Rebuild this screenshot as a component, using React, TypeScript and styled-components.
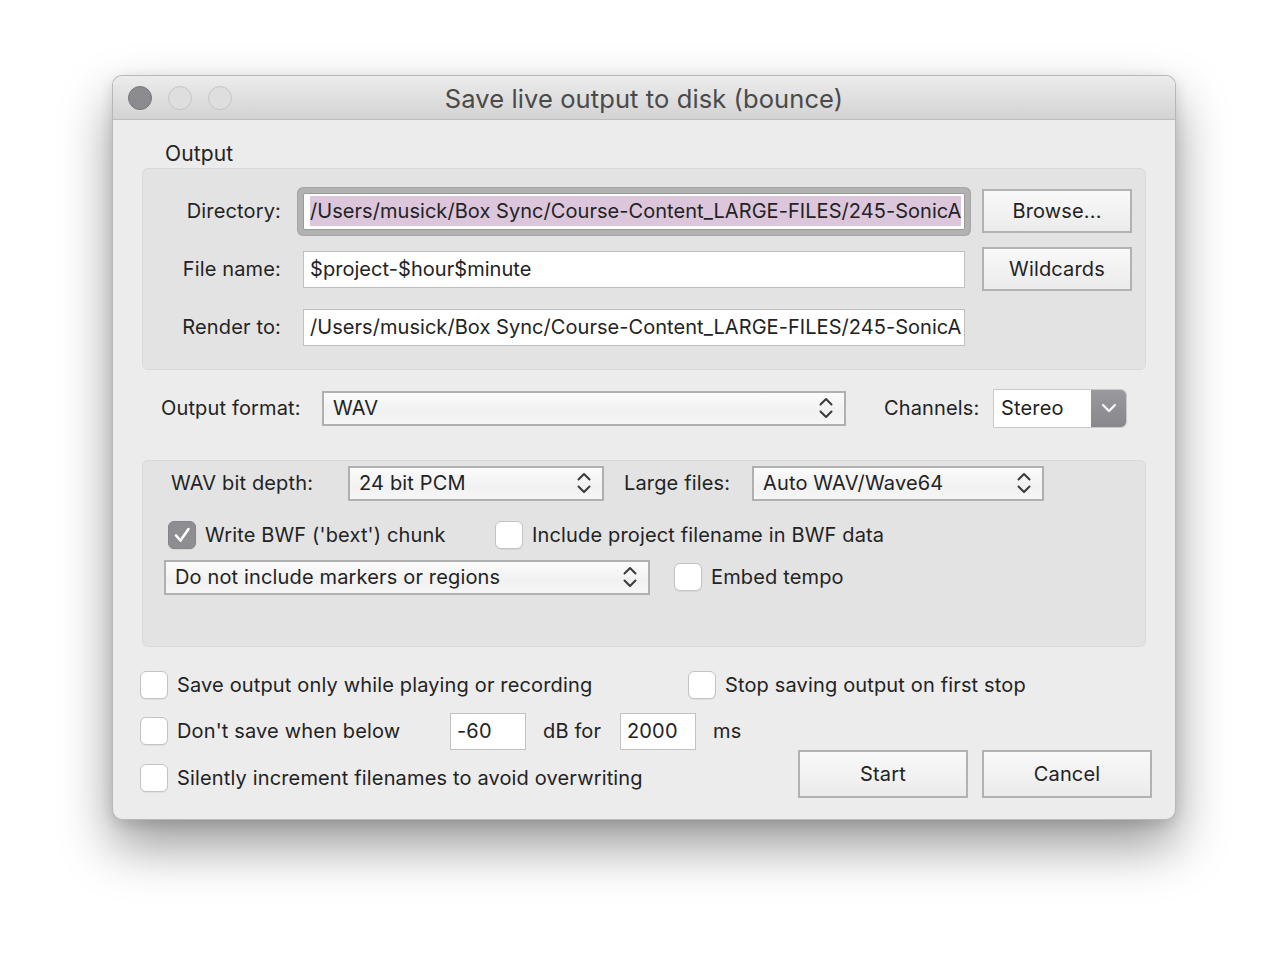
import React from "react";
import styled, { createGlobalStyle } from "styled-components";

const Global = createGlobalStyle`
  html, body { margin: 0; padding: 0; background: #ffffff; }
  body { font-family: Inter, "Liberation Sans", Arial, sans-serif; color: #232323; letter-spacing: 0.15px; }
  * { box-sizing: border-box; }
`;

const Page = styled.div`
  width: 1288px;
  height: 968px;
  padding: 75px 0 0 112px;
  background: #ffffff;
`;

const Window = styled.div`
  width: 1064px;
  height: 745px;
  background: #ececec;
  border-radius: 10px;
  border: 1px solid rgba(0, 0, 0, 0.22);
  box-shadow: 0 26px 52px rgba(0, 0, 0, 0.4), 0 4px 14px rgba(0, 0, 0, 0.12);
  display: flex;
  flex-direction: column;
  overflow: hidden;
`;

const TitleBar = styled.div`
  height: 44px;
  flex: none;
  display: flex;
  align-items: center;
  padding-left: 15px;
  background: linear-gradient(#ececec, #d3d3d3);
  border-bottom: 1px solid #bdbdbd;
  position: relative;
`;

const Light = styled.span<{ $dark?: boolean }>`
  width: 24px;
  height: 24px;
  border-radius: 50%;
  margin-right: 16px;
  background: ${(p) => (p.$dark ? "#8c8b90" : "#dedede")};
  border: 1px solid ${(p) => (p.$dark ? "#76757a" : "#c6c6c6")};
`;

const Title = styled.div`
  position: absolute;
  left: 0;
  right: 0;
  top: 1px;
  bottom: 0;
  display: flex;
  align-items: center;
  justify-content: center;
  font-size: 25.5px;
  letter-spacing: 0.1px;
  color: #4a4a4a;
  pointer-events: none;
`;

const Content = styled.div`
  padding: 0 29px 0 29px;
  display: flex;
  flex-direction: column;
`;

const SectionTitle = styled.div`
  margin: 22px 0 2px 23px;
  height: 24px;
  line-height: 24px;
  font-size: 21px;
`;

const Group = styled.div<{ $h: number; $mt?: number }>`
  width: 1004px;
  height: ${(p) => p.$h}px;
  margin-top: ${(p) => p.$mt ?? 0}px;
  background: #e3e3e3;
  border: 1px solid #d9d9d9;
  border-radius: 6px;
`;

const FileGrid = styled.div`
  display: grid;
  grid-template-columns: 160px 662px 167px;
  grid-auto-rows: 58px;
  align-items: center;
  padding-top: 13px;
`;

const FieldLabel = styled.div`
  text-align: right;
  padding-right: 22px;
  font-size: 20px;
`;

const TextBox = styled.div<{ $focus?: boolean }>`
  height: 37px;
  background: #ffffff;
  border: 1px solid #bfbfbf;
  font-size: 20px;
  letter-spacing: 0.05px;
  line-height: 35px;
  padding: 0 0 0 6px;
  white-space: nowrap;
  overflow: hidden;
  ${(p) =>
    p.$focus
      ? `box-shadow: 0 0 0 5px #b2b2b2, 0 0 0 6px #a6a6a6; border-radius: 2px; border-color: #9a9a9a;`
      : ""}
`;

const Selected = styled.span`
  background: #dcc6dc;
  padding: 3px 0;
`;

const Button = styled.div<{ $w: number; $h: number }>`
  width: ${(p) => p.$w}px;
  height: ${(p) => p.$h}px;
  justify-self: end;
  display: flex;
  align-items: center;
  justify-content: center;
  font-size: 20px;
  background: linear-gradient(#f9f9f9, #ebebeb);
  border: 2px solid #b2b2b2;
`;

const Row = styled.div<{ $h: number; $mt?: number; $pl?: number }>`
  display: flex;
  align-items: center;
  height: ${(p) => p.$h}px;
  margin-top: ${(p) => p.$mt ?? 0}px;
  padding-left: ${(p) => p.$pl ?? 0}px;
  font-size: 20px;
`;

const Label = styled.span<{ $w?: number; $ml?: number }>`
  display: inline-block;
  ${(p) => (p.$w ? `width: ${p.$w}px;` : "")}
  margin-left: ${(p) => p.$ml ?? 0}px;
  white-space: nowrap;
`;

const Popup = styled.div<{ $w: number; $h: number; $ml?: number }>`
  width: ${(p) => p.$w}px;
  height: ${(p) => p.$h}px;
  margin-left: ${(p) => p.$ml ?? 0}px;
  flex: none;
  display: flex;
  align-items: center;
  justify-content: space-between;
  padding: 0 10px 0 9px;
  border: 2px solid #b0b0b0;
  background: linear-gradient(#fbfbfb, #f1f1f1 60%, #f6f6f6);
  font-size: 20px;
`;

const Combo = styled.div<{ $ml?: number }>`
  width: 134px;
  height: 39px;
  margin-left: ${(p) => p.$ml ?? 0}px;
  display: flex;
  border: 1px solid #c9c9c9;
  border-radius: 0 6px 6px 0;
  overflow: hidden;
  background: #ffffff;
  font-size: 20px;
`;

const ComboText = styled.div`
  flex: 1;
  padding-left: 7px;
  display: flex;
  align-items: center;
`;

const ComboArrow = styled.div`
  width: 35px;
  background: linear-gradient(#9a999e, #88878c);
  display: flex;
  align-items: center;
  justify-content: center;
`;

const Check = styled.span<{ $on?: boolean; $ml?: number }>`
  width: 28px;
  height: 28px;
  flex: none;
  margin-left: ${(p) => p.$ml ?? 0}px;
  margin-right: 9px;
  border-radius: 6px;
  border: 1px solid ${(p) => (p.$on ? "#85848a" : "#c3c3c3")};
  background: ${(p) => (p.$on ? "#8e8d92" : "#ffffff")};
  box-shadow: 0 1px 1px rgba(0, 0, 0, 0.06);
  display: flex;
  align-items: center;
  justify-content: center;
`;

const SmallBox = styled.div<{ $ml?: number }>`
  width: 76px;
  height: 37px;
  margin-left: ${(p) => p.$ml ?? 0}px;
  background: #ffffff;
  border: 1px solid #c2c2c2;
  padding-left: 6px;
  line-height: 35px;
  font-size: 20px;
`;

const Bottom = styled.div`
  margin: 15px -6px 0 -2px;
  display: flex;
  flex-direction: column;
`;

const TopPair = styled.div`
  display: grid;
  grid-template-columns: 548px auto;
  height: 46px;
  align-items: center;
`;

const Lower = styled.div`
  display: flex;
  justify-content: space-between;
  align-items: flex-end;
`;

const Stack = styled.div`
  display: flex;
  flex-direction: column;
`;

const Buttons = styled.div`
  display: flex;
  gap: 14px;
  margin-bottom: 4px;
`;

const UpDown = () => (
  <svg width="16" height="26" viewBox="0 0 16 26" fill="none">
    <path d="M2.5 9.5 L8 4 L13.5 9.5" stroke="#3a3a3a" strokeWidth="2" strokeLinecap="round" strokeLinejoin="round" />
    <path d="M2.5 16.5 L8 22 L13.5 16.5" stroke="#3a3a3a" strokeWidth="2" strokeLinecap="round" strokeLinejoin="round" />
  </svg>
);

const Down = () => (
  <svg width="16" height="12" viewBox="0 0 16 12" fill="none">
    <path d="M2 3 L8 9 L14 3" stroke="#ffffff" strokeWidth="2.2" strokeLinecap="round" strokeLinejoin="round" />
  </svg>
);

const Tick = () => (
  <svg width="20" height="20" viewBox="0 0 20 20" fill="none">
    <path d="M4 10.5 L8.5 15.5 L16.5 4" stroke="#ffffff" strokeWidth="2.6" strokeLinecap="round" strokeLinejoin="round" />
  </svg>
);

const path = "/Users/musick/Box Sync/Course-Content_LARGE-FILES/245-SonicA";

export default function App() {
  return (
    <>
      <Global />
      <Page>
        <Window>
          <TitleBar>
            <Light $dark />
            <Light />
            <Light />
            <Title>Save live output to disk (bounce)</Title>
          </TitleBar>
          <Content>
            <SectionTitle>Output</SectionTitle>
            <Group $h={202}>
              <FileGrid>
                <FieldLabel>Directory:</FieldLabel>
                <TextBox $focus>
                  <Selected>{path}</Selected>
                </TextBox>
                <Button $w={150} $h={44}>Browse...</Button>
                <FieldLabel>File name:</FieldLabel>
                <TextBox>$project-$hour$minute</TextBox>
                <Button $w={150} $h={44}>Wildcards</Button>
                <FieldLabel>Render to:</FieldLabel>
                <TextBox>{path}</TextBox>
              </FileGrid>
            </Group>

            <Row $h={40} $mt={18} $pl={19}>
              <Label $w={161}>Output format:</Label>
              <Popup $w={524} $h={35}>
                <span>WAV</span>
                <UpDown />
              </Popup>
              <Label $ml={38} $w={109}>Channels:</Label>
              <Combo>
                <ComboText>Stereo</ComboText>
                <ComboArrow>
                  <Down />
                </ComboArrow>
              </Combo>
            </Row>

            <Group $h={187} $mt={32}>
              <Row $h={38} $mt={3} $pl={28}>
                <Label $w={177}>WAV bit depth:</Label>
                <Popup $w={256} $h={35}>
                  <span>24 bit PCM</span>
                  <UpDown />
                </Popup>
                <Label $ml={20} $w={128}>Large files:</Label>
                <Popup $w={292} $h={35}>
                  <span>Auto WAV/Wave64</span>
                  <UpDown />
                </Popup>
              </Row>
              <Row $h={38} $mt={14} $pl={25}>
                <Check $on>
                  <Tick />
                </Check>
                <Label $w={290}>Write BWF ('bext') chunk</Label>
                <Check />
                <Label>Include project filename in BWF data</Label>
              </Row>
              <Row $h={38} $mt={4} $pl={21}>
                <Popup $w={486} $h={35}>
                  <span>Do not include markers or regions</span>
                  <UpDown />
                </Popup>
                <Check $ml={24} />
                <Label>Embed tempo</Label>
              </Row>
            </Group>

            <Bottom>
              <TopPair>
                <Row $h={46}>
                  <Check />
                  <Label>Save output only while playing or recording</Label>
                </Row>
                <Row $h={46}>
                  <Check />
                  <Label>Stop saving output on first stop</Label>
                </Row>
              </TopPair>
              <Lower>
                <Stack>
                  <Row $h={46}>
                    <Check />
                    <Label $w={273}>Don't save when below</Label>
                    <SmallBox>-60</SmallBox>
                    <Label $ml={17} $w={77}>dB for</Label>
                    <SmallBox>2000</SmallBox>
                    <Label $ml={17}>ms</Label>
                  </Row>
                  <Row $h={48}>
                    <Check />
                    <Label>Silently increment filenames to avoid overwriting</Label>
                  </Row>
                </Stack>
                <Buttons>
                  <Button $w={170} $h={48}>Start</Button>
                  <Button $w={170} $h={48}>Cancel</Button>
                </Buttons>
              </Lower>
            </Bottom>
          </Content>
        </Window>
      </Page>
    </>
  );
}
